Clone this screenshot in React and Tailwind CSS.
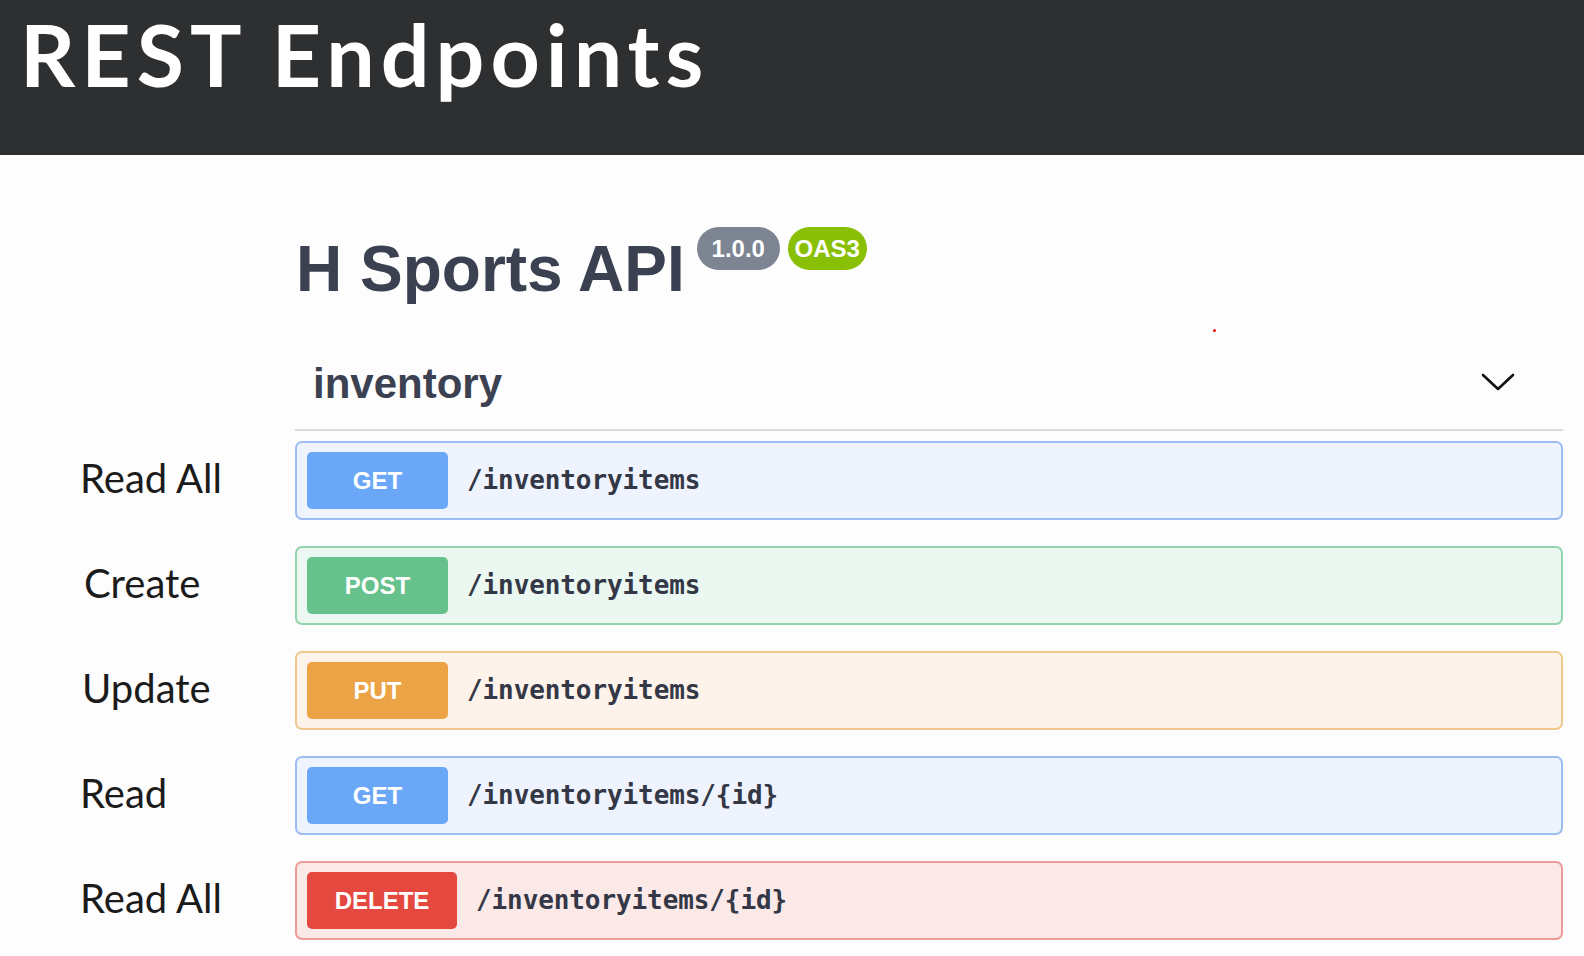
import React from 'react';

const rows = [
  { label: 'Read All', method: 'GET', path: '/inventoryitems', indent: 'pl-[80px]' },
  { label: 'Create', method: 'POST', path: '/inventoryitems', indent: 'pl-[84px]' },
  { label: 'Update', method: 'PUT', path: '/inventoryitems', indent: 'pl-[82px]' },
  { label: 'Read', method: 'GET', path: '/inventoryitems/{id}', indent: 'pl-[80px]' },
  { label: 'Read All', method: 'DELETE', path: '/inventoryitems/{id}', indent: 'pl-[80px]' },
];

const styles = {
  GET: { box: 'border-[#9dbdf2] bg-[#eef3fd]', badge: 'bg-[#6ba7f7] w-[141px]' },
  POST: { box: 'border-[#93d3ad] bg-[#ebf8f1]', badge: 'bg-[#67c18d] w-[141px]' },
  PUT: { box: 'border-[#f0c78f] bg-[#fdf3ea]', badge: 'bg-[#eba346] w-[141px]' },
  DELETE: { box: 'border-[#eb9b98] bg-[#fbe9e8]', badge: 'bg-[#e5483f] w-[150px]' },
};

function Chevron() {
  return (
    <svg width="34" height="20" viewBox="0 0 34 20" fill="none" className="mb-[4px]">
      <path d="M2 3 L17 17 L32 3" stroke="#111" strokeWidth="2.6" strokeLinecap="round" strokeLinejoin="round" />
    </svg>
  );
}

function Operation({ method, path }) {
  const s = styles[method];
  return (
    <div className={`h-[79px] border-2 rounded-[7px] flex items-center pl-[10px] gap-[19px] ${s.box}`}>
      <div className={`h-[57px] rounded-[5px] flex items-center justify-center text-white text-[24px] font-bold font-['Liberation_Sans',Arial,sans-serif] ${s.badge}`}>
        {method}
      </div>
      <span className="text-[26px] font-bold text-[#343846] font-['DejaVu_Sans_Mono','Liberation_Mono',monospace] tracking-[-0.1px]">
        {path}
      </span>
    </div>
  );
}

export default function App() {
  return (
    <div className="relative w-[1584px] h-[956px] bg-[#fdfdfd] overflow-hidden">
      <header className="h-[155px] bg-[#2e2f31] pl-[20px] pt-[2px]">
        <h1 className="text-[86px] leading-[1.2] font-bold text-white font-['Lato',sans-serif] tracking-[6px]">
          REST Endpoints
        </h1>
      </header>

      <div className="grid grid-cols-[295px_1268px]">
        <div />
        <div>
          <div className="mt-[72px] flex items-start">
            <h2 className="pt-[10px] pl-[1px] text-[64px] leading-none font-bold text-[#3b4151] font-['Liberation_Sans',Arial,sans-serif]">
              H Sports API
            </h2>
            <div className="ml-[12px] flex gap-[8px]">
              <span className="h-[43px] w-[83px] rounded-full bg-[#7d8492] text-white text-[24px] font-bold flex items-center justify-center font-['Liberation_Sans',Arial,sans-serif]">
                1.0.0
              </span>
              <span className="h-[43px] w-[79px] rounded-full bg-[#89bf04] text-white text-[24px] font-bold flex items-center justify-center font-['Liberation_Sans',Arial,sans-serif]">
                OAS3
              </span>
            </div>
          </div>

          <div className="mt-[62px] flex items-center justify-between pl-[18px] pr-[48px] pb-[24px] border-b-2 border-[#d9dbdd]">
            <span className="text-[42px] leading-none font-bold text-[#3b4151] font-['Liberation_Sans',Arial,sans-serif]">
              inventory
            </span>
            <Chevron />
          </div>
        </div>
      </div>

      <div className="mt-[10px] flex flex-col gap-[26px]">
        {rows.map((r, i) => (
          <div key={i} className="grid grid-cols-[295px_1268px] items-center">
            <span className={`text-[40px] leading-none pb-[6px] text-[#1b1b1b] font-['Lato',sans-serif] ${r.indent}`}>{r.label}</span>
            <Operation method={r.method} path={r.path} />
          </div>
        ))}
      </div>

      <span className="absolute left-[1213px] top-[329px] w-[3px] h-[3px] rounded-full bg-[#e11]" />
    </div>
  );
}
